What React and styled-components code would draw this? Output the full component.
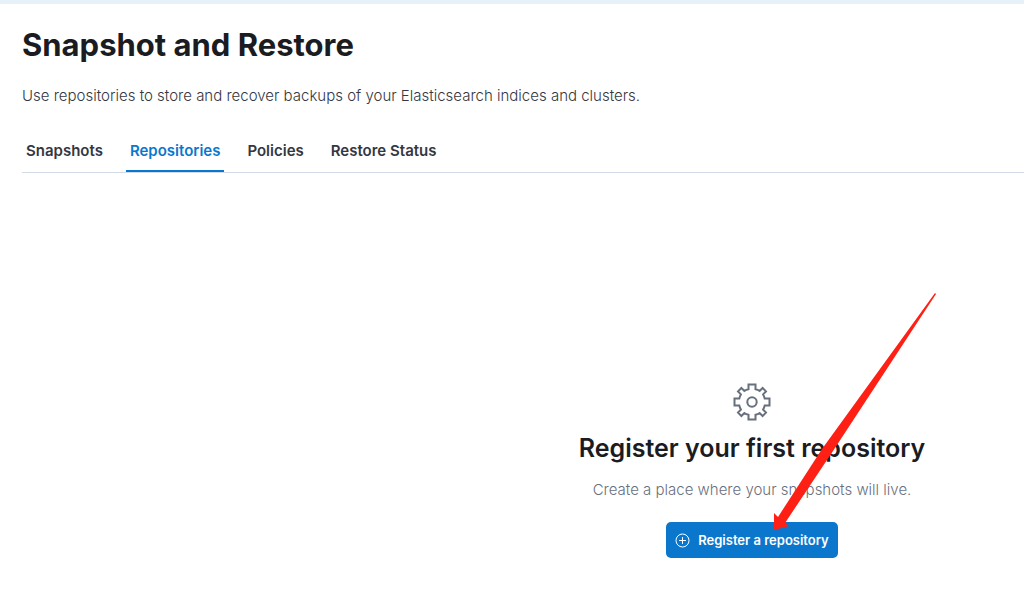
import React, { useState } from 'react';
import styled, { createGlobalStyle } from 'styled-components';

const GlobalStyle = createGlobalStyle`
	* {
		box-sizing: border-box;
	}

	body {
		margin: 0;
		background-color: #ffffff;
		color: #343741;
		font-family: Inter, 'Liberation Sans', sans-serif;
		font-size: 15px;
		font-weight: 300;
		overflow-x: hidden;
	}
`;

const TopBar = styled.div`
	height: 4px;
	background-color: #e6f1fa;
`;
const Page = styled.main`
	padding: 23px 0 0 22px;
`;
const Title = styled.h1`
	margin: 0;
	color: #1a1c21;
	font-size: 31px;
	font-weight: 700;
	line-height: 36px;
`;
const Description = styled.p`
	margin: 21px 0 0;
	line-height: 24px;
`;
const Tabs = styled.div`
	display: flex;
	gap: 19px;
	margin-top: 21px;
	border-bottom: 1px solid #d3dae6;
`;
const Tab = styled.button`
	padding: 0 4px;
	height: 43px;
	border: none;
	background-color: transparent;
	box-shadow: ${({ $active }) => ($active ? 'inset 0 -2px #0b77cc' : 'none')};
	color: ${({ $active }) => ($active ? '#0b77cc' : '#343741')};
	cursor: pointer;
	font-family: inherit;
	font-size: 15px;
	font-weight: 600;
`;
const Prompt = styled.section`
	position: relative;
	display: flex;
	flex-direction: column;
	align-items: center;
	margin-left: 458px;
	padding: 210px 0 40px;
	text-align: center;
`;
const PromptTitle = styled.h2`
	margin: 11px 0 0;
	color: #1a1c21;
	font-size: 25px;
	font-weight: 600;
	line-height: 32px;
`;
const PromptText = styled.p`
	margin: 14px 0 0;
	color: #69707d;
	line-height: 24px;
`;
const Button = styled.button`
	display: flex;
	align-items: center;
	gap: 8px;
	margin-top: 20px;
	padding: 0 9px;
	height: 36px;
	border: none;
	border-radius: 5px;
	background-color: #0b77cc;
	color: #ffffff;
	cursor: pointer;
	font-family: inherit;
	font-size: 13px;
	font-weight: 600;
`;
const Arrow = styled.svg`
	position: absolute;
	top: 120px;
	left: 50%;
	margin-left: 20px;
	pointer-events: none;
`;

const GearIcon = () => (
	<svg width="38" height="38" viewBox="0 0 38 38" fill="none" stroke="#69707d" strokeWidth="2">
		<path d="M15.5 1.5h7v4.8q2.3.5 4.1 1.6l3-2.9L33 8.400l-2.900 3q1.100 1.800 1.600 4.100h4.800v7h-4.800q-.5 2.300-1.600 4.100l2.900 3-3.400 3.400-3-2.900q-1.800 1.100-4.100 1.600v4.800h-7v-4.800q-2.300-.5-4.100-1.600l-3 2.900L5 29.600l2.900-3q-1.100-1.800-1.600-4.100H1.500v-7h4.800q.5-2.300 1.600-4.100L5 8.400 8.400 5l3 2.900q1.800-1.100 4.100-1.600z" />
		<circle cx="19" cy="19" r="4.7" />
	</svg>
);

const PlusIcon = () => (
	<svg width="15" height="15" viewBox="0 0 15 15" fill="none" stroke="currentColor">
		<circle cx="7.5" cy="7.5" r="6.5" />
		<path d="M7.5 4v7M4 7.5h7" />
	</svg>
);

const tabs = ['Snapshots', 'Repositories', 'Policies', 'Restore Status'];

const App = () => {
	const [selected, setSelected] = useState('Repositories');
	return (
		<>
			<GlobalStyle />
			<TopBar />
			<Page>
				<Title>Snapshot and Restore</Title>
				<Description>
					Use repositories to store and recover backups of your Elasticsearch
					indices and clusters.
				</Description>
				<Tabs role="tablist">
					{tabs.map((tab) => (
						<Tab
							key={tab}
							role="tab"
							aria-selected={tab === selected}
							$active={tab === selected}
							onClick={() => setSelected(tab)}
						>
							{tab}
						</Tab>
					))}
				</Tabs>
				<Prompt>
					<GearIcon />
					<PromptTitle>Register your first repository</PromptTitle>
					<PromptText>Create a place where your snapshots will live.</PromptText>
					<Button>
						<PlusIcon />
						Register a repository
					</Button>
					<Arrow width="166" height="238" viewBox="0 0 166 238" fill="#ff2015">
						<path d="M163 0l1 1L61 158 13 230l4 3-15 4V220l4 4 44-68z" />
					</Arrow>
				</Prompt>
			</Page>
		</>
	);
};

export default App;
